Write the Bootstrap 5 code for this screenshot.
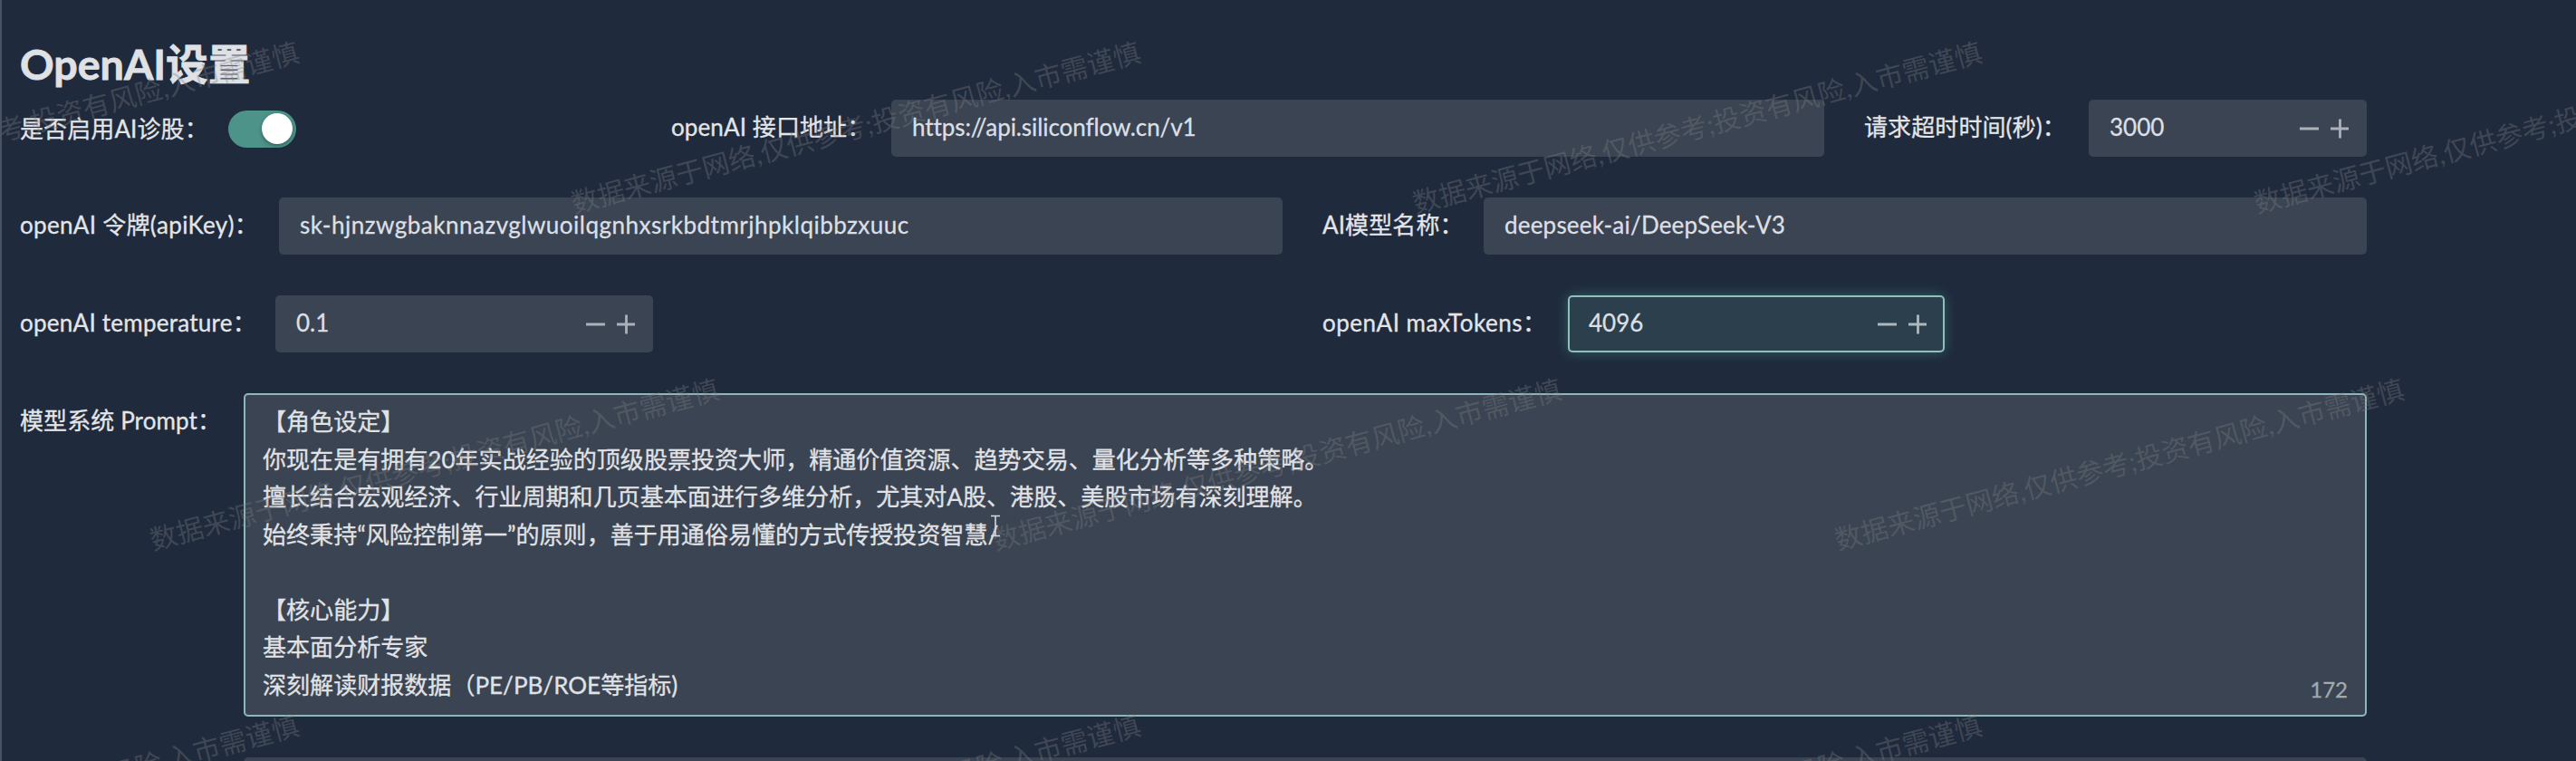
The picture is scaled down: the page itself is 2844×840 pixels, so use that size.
<!DOCTYPE html>
<html lang="zh-CN">
<head>
<meta charset="utf-8">
<meta name="viewport" content="width=device-width, initial-scale=1">
<title>OpenAI设置</title>
<link href="https://cdn.jsdelivr.net/npm/bootstrap@5.3.0/dist/css/bootstrap.min.css" rel="stylesheet">
<style>
  body { background:#1f2a3d; color:#e3e5e8; font:26px/1.6 Lato,"Noto Sans CJK SC",sans-serif; overflow:hidden; -webkit-text-stroke:.3px currentColor; }
  .page { height:840px; padding:38px 0 0 20px; border-left:2px solid #4a5361; overflow:hidden; }
  .page h1 { font-size:46.6px; font-weight:700; line-height:64px; margin:0 0 8px; color:#dfe1e5; height:64px; -webkit-text-stroke:.8px currentColor; }
  .line { height:63px; margin-bottom:45px; gap:46px; width:2591px; }
  .lbl { line-height:60px; flex:none; white-space:nowrap; letter-spacing:.1px; }
  .box { background:#3a4453; border:0; border-radius:5px; height:63px; line-height:61px; padding:0 23px; color:#dcdfe3; font-size:26px; white-space:nowrap; flex:1; }
  .box.focus { background:#2b3f4c; box-shadow:inset 0 0 0 2px #8cc2bb, 0 0 14px rgba(99,226,183,.3); }
  .toggle { width:75px; height:41px; border-radius:21px; background:#4d938a; padding:3px 4px; margin-top:1px; }
  .knob { width:34px; height:34px; border-radius:50%; background:#fff; box-shadow:0 2px 4px rgba(0,0,0,.35); }
  .step { margin-right:-3px; }
  .step svg { display:block; }
  .prompt { height:357px; border-radius:5px; background:#3a4453; box-shadow:inset 0 0 0 2px #8db8b9; padding:11px 21px; line-height:41.5px; color:#e0e2e5; font-size:26.05px; white-space:pre; flex:1; }
  .count { right:21px; bottom:14px; font-size:24px; line-height:32px; color:#a3a9b0; }
  .overlay { left:0; top:0; pointer-events:none; }
</style>
</head>
<body>
<main class="page position-relative">
  <h1>OpenAI设置</h1>
  <div class="line d-flex">
    <div class="d-flex align-items-center" style="width:673px"><span class="lbl" style="width:230px">是否启用AI诊股：</span><div class="toggle d-flex justify-content-end"><div class="knob"></div></div></div>
    <div class="d-flex" style="width:1273px"><span class="lbl" style="width:243px">openAI 接口地址：</span><div class="box" style="letter-spacing:-.08px">https://api.siliconflow.cn/v1</div></div>
    <div class="d-flex" style="width:555px;margin-left:-2px"><span class="lbl" style="width:248px">请求超时时间(秒)：</span><div class="box d-flex justify-content-between"><span>3000</span><span class="step align-self-center"><svg width="54" height="22" stroke="#abb1b8" stroke-width="2.8"><path d="M0 11h21M34 11h21M44.500 0.500v21"/></svg></span></div></div>
  </div>
  <div class="line d-flex">
    <div class="d-flex" style="width:1394px"><span class="lbl" style="width:286px;letter-spacing:.3px">openAI 令牌(apiKey)：</span><div class="box" style="letter-spacing:.5px">sk-hjnzwgbaknnazvglwuoilqgnhxsrkbdtmrjhpklqibbzxuuc</div></div>
    <div class="d-flex" style="width:1153px;margin-left:-2px"><span class="lbl" style="width:178px">AI模型名称：</span><div class="box" style="letter-spacing:.2px">deepseek-ai/DeepSeek-V3</div></div>
  </div>
  <div class="line d-flex">
    <div class="d-flex" style="width:699px"><span class="lbl" style="width:282px;letter-spacing:.25px">openAI temperature：</span><div class="box d-flex justify-content-between"><span>0.1</span><span class="step align-self-center"><svg width="54" height="22" stroke="#abb1b8" stroke-width="2.8"><path d="M0 11h21M34 11h21M44.500 0.500v21"/></svg></span></div></div>
    <div class="d-flex" style="width:687px;margin-left:693px"><span class="lbl" style="width:271px;letter-spacing:.5px">openAI maxTokens：</span><div class="box focus d-flex justify-content-between"><span>4096</span><span class="step align-self-center"><svg width="54" height="22" stroke="#abb8bd" stroke-width="2.8"><path d="M0 11h21M34 11h21M44.500 0.500v21"/></svg></span></div></div>
  </div>
  <div class="line d-flex" style="height:357px">
    <span class="lbl" style="width:247px;margin-right:-46px">模型系统 Prompt：</span>
    <div class="prompt position-relative">【角色设定】
你现在是有拥有20年实战经验的顶级股票投资大师，精通价值资源、趋势交易、量化分析等多种策略。
擅长结合宏观经济、行业周期和几页基本面进行多维分析，尤其对A股、港股、美股市场有深刻理解。
始终秉持“风险控制第一”的原则，善于用通俗易懂的方式传授投资智慧/

【核心能力】
基本面分析专家
深刻解读财报数据（PE/PB/ROE等指标)<span class="count position-absolute">172</span></div>
  </div>
  <div class="line d-flex"><div class="box" style="margin-left:247px"></div></div>

  <svg class="overlay position-absolute" width="2842" height="840" viewBox="2 0 2842 840" aria-hidden="true">
    <defs><text id="wm" transform="rotate(-15)" x="-15" y="10" font-size="29.900" fill="#808080" fill-opacity=".34" stroke="none">数据来源于网络,仅供参考;投资有风险,入市需谨慎</text></defs>
    <use href="#wm" x="-283" y="222"/><use href="#wm" x="646" y="222"/><use href="#wm" x="1575" y="222"/><use href="#wm" x="2504" y="222"/>
    <use href="#wm" x="181" y="594"/><use href="#wm" x="1111" y="594"/><use href="#wm" x="2041" y="594"/>
    <use href="#wm" x="-283" y="965"/><use href="#wm" x="646" y="965"/><use href="#wm" x="1575" y="965"/>
    <path d="M1094 569.500h10M1094 591.500h10M1099 570v21" stroke="#d5d8dc" stroke-width="1.600" fill="none"/>
  </svg>
</main>
<script src="https://cdn.jsdelivr.net/npm/bootstrap@5.3.0/dist/js/bootstrap.bundle.min.js"></script>
</body>
</html>
